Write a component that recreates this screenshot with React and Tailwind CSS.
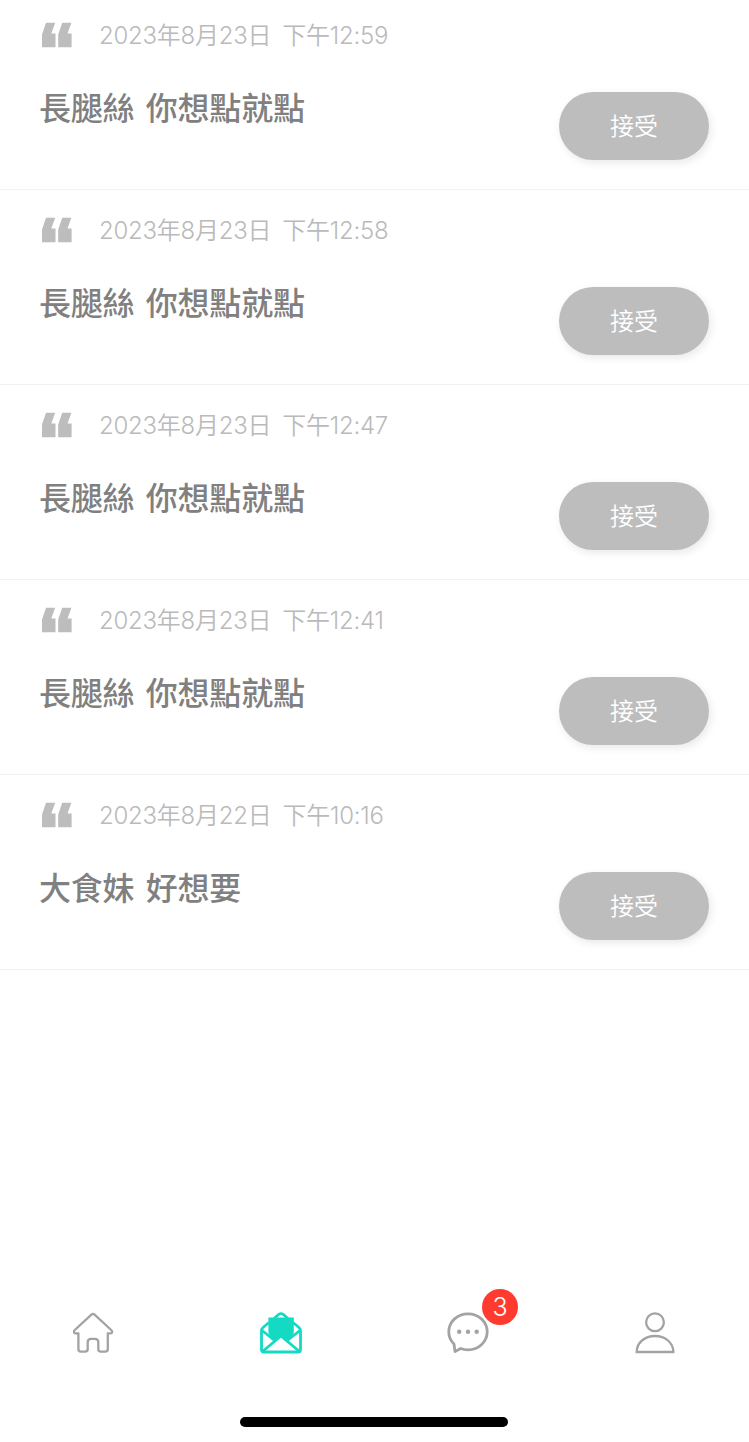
const requests = [
  { id: 1, date: "2023年8月23日", time: "下午12:59", title: "長腿絲 你想點就點" },
  { id: 2, date: "2023年8月23日", time: "下午12:58", title: "長腿絲 你想點就點" },
  { id: 3, date: "2023年8月23日", time: "下午12:47", title: "長腿絲 你想點就點" },
  { id: 4, date: "2023年8月23日", time: "下午12:41", title: "長腿絲 你想點就點" },
  { id: 5, date: "2023年8月22日", time: "下午10:16", title: "大食妹 好想要" },
];

function QuoteIcon() {
  return (
    <svg width="30" height="26" viewBox="0 0 30 26" fill="#bdbdbd">
      <path d="M4 .7H13.200L9.300 11.500H13.500V25.300H0V12.500Z" />
      <path d="M20.200 .7H29.400L25.500 11.500H29.600V25.300H16.200V12.500Z" />
    </svg>
  );
}

function HomeIcon() {
  return (
    <svg width="42" height="42" viewBox="0.4 -0.3 42 42" fill="none" stroke="#a3a3a3" strokeWidth="2.3" strokeLinejoin="round">
      <path d="M18.800 2.400Q20.400 1 22 2.400L38.600 17.700Q40 19 39.300 20.300Q38.900 21 37.700 21H35.200V36.700Q35.200 39.300 32.700 39.300H28.200Q25.700 39.300 25.700 36.700V30Q25.700 26.600 22.300 26.600H18.500Q15.100 26.600 15.100 30V36.700Q15.100 39.300 12.600 39.300H8.300Q5.800 39.300 5.800 36.700V21H3.100Q1.900 21 1.500 20.300Q.8 19 2.200 17.700Z" />
    </svg>
  );
}

function MailIcon() {
  return (
    <svg width="42" height="42" viewBox="0 0 42 42" fill="none" stroke="#14dac4" strokeWidth="2.8" strokeLinejoin="round">
      <path d="M9 10.500L3 15.500Q1.500 16.800 1.500 19V37.500Q1.500 40 4 40H38Q40.500 40 40.500 37.500V19Q40.500 16.800 39 15.500L33 10.500" />
      <path d="M1.500 18L14 28M40.500 18L28 28M2.500 39.500L21 24L39.500 39.500" />
      <path d="M14 6.500L18.800 2.400Q21 .9 23.200 2.400L28 6.500" />
      <path d="M8.400 5.500H33.800V21L28.500 29L21 23.500L13.500 29L8.400 21Z" fill="#14dac4" stroke="none" />
    </svg>
  );
}

function ChatIcon() {
  return (
    <svg width="42" height="42" viewBox="0 0 42 42" fill="none" stroke="#a3a3a3" strokeWidth="2.8" strokeLinejoin="round">
      <path d="M21 1.800C32 1.800 40.200 10 40.200 19.800S32 37.800 21 37.800Q16.800 37.800 13.600 36.500L8 39.600L7 32C3.800 29 1.800 24.800 1.800 19.800C1.800 10 10 1.800 21 1.800Z" />
      <g fill="#a3a3a3" stroke="none">
        <circle cx="12.200" cy="19.800" r="2.200" />
        <circle cx="21" cy="19.800" r="2.200" />
        <circle cx="29.700" cy="19.800" r="2.200" />
      </g>
    </svg>
  );
}

function UserIcon() {
  return (
    <svg width="42" height="42" viewBox="0 0 42 42" fill="none" stroke="#a3a3a3" strokeWidth="2.300">
      <circle cx="21" cy="10.300" r="8.900" />
      <path d="M2.700 40Q2.700 33 8 28.500Q13.200 24 21 24T34 28.500Q39.300 33 39.300 40Z" />
    </svg>
  );
}

function RequestRow({ item }) {
  return (
    <div className="h-[195px] border-b border-[#f2f2f2] px-10 pt-[27px] flex justify-between">
      <div>
        <div className="h-[26px] pl-0.5 flex items-center">
          <QuoteIcon />
          <p className="ml-[27px] pt-0.5 flex gap-[11px] text-2xl leading-6 font-[350] tracking-[-0.25px] text-[#bababa] whitespace-nowrap">
            <span>{item.date}</span>
            <span>{item.time}</span>
          </p>
        </div>
        <h2 className="-ml-px mt-[37px] text-[32px] leading-[48px] font-medium tracking-[-0.2px] [word-spacing:3px] text-[#808080] whitespace-nowrap">
          {item.title}
        </h2>
      </div>
      <button className="mt-[70px] w-[150px] h-[68px] pt-0.5 shrink-0 rounded-full bg-[#bdbdbd] shadow-[2px_3px_8px_rgba(0,0,0,0.09)] text-white text-2xl font-[350]">
        接受
      </button>
    </div>
  );
}

function App() {
  return (
    <div className="h-[1442px] overflow-hidden bg-white flex flex-col font-[Inter,'Noto_Sans_CJK_TC',sans-serif]">
      <div className="-mt-[5px] flex-1">
        {requests.map((item) => (
          <RequestRow key={item.id} item={item} />
        ))}
      </div>

      {/* Bottom tabs */}
      <nav className="h-[105px] grid grid-cols-4 justify-items-center">
        <a href="#home" aria-label="Home">
          <HomeIcon />
        </a>
        <a href="#requests" aria-label="Requests">
          <MailIcon />
        </a>
        <a href="#chat" aria-label="Chat" className="relative">
          <ChatIcon />
          <span className="absolute left-[35px] -top-[23px] size-9 rounded-full bg-[#ff3b30] text-white text-[25px] font-[350] leading-9 text-center">
            3
          </span>
        </a>
        <a href="#profile" aria-label="Profile">
          <UserIcon />
        </a>
      </nav>
      <div className="ml-[240px] mb-[15px] h-2.5 w-[268px] rounded-full bg-black" />
    </div>
  );
}

export default App;
